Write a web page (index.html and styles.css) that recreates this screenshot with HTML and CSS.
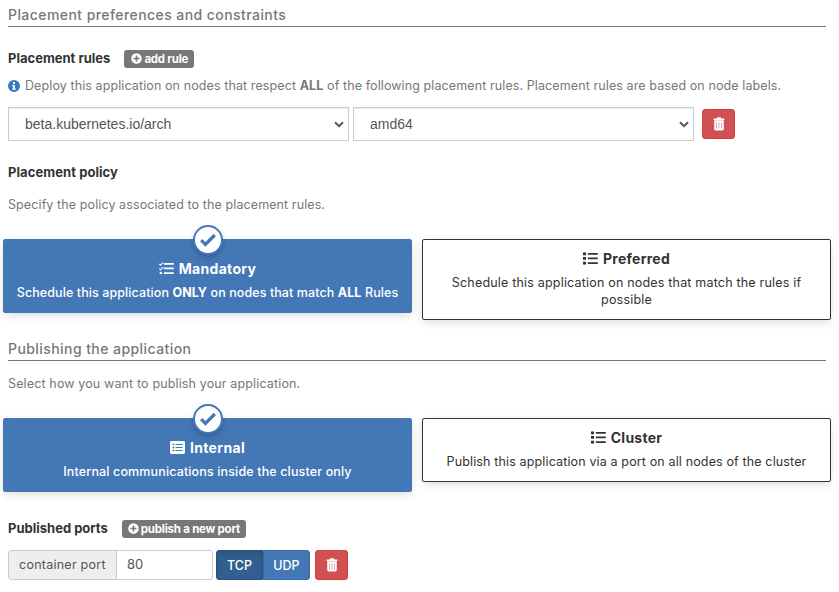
FILE: index.html
```html
<!DOCTYPE html>
<html lang="en">
<head>
<meta charset="utf-8">
<title>Placement and publishing</title>
<link rel="stylesheet" href="styles.css">
</head>
<body>
<svg width="0" height="0" class="defs" aria-hidden="true">
  <symbol id="plus" viewBox="0 0 12 12"><path fill-rule="evenodd" d="M6 .3a5.7 5.7 0 1 0 0 11.4A5.7 5.7 0 0 0 6 .3zM5.1 2.7h1.8v2.4h2.4v1.8H6.9v2.4H5.1V6.900H2.700V5.100h2.400z"/></symbol>
  <symbol id="info" viewBox="0 0 12 12"><path fill-rule="evenodd" d="M6 0a6 6 0 1 0 0 12A6 6 0 0 0 6 0zM5 2h2v2H5zM4.300 5h2.600v3.600h.8v1.200H4.300V8.600h.8V6.200h-.8z"/></symbol>
  <symbol id="trash" viewBox="0 0 12 14"><path fill-rule="evenodd" d="M.7 1.400h3L4.300.3h3.400l.6 1.100h3v1.700H.7zM1.200 3.300h9.600V12a1.400 1.400 0 0 1-1.400 1.400H2.600A1.400 1.400 0 0 1 1.200 12zM3.400 5.300v6.200h.5V5.300zM5.750 5.300v6.200h.5V5.300zM8.100 5.300v6.200h.5V5.300z"/></symbol>
  <symbol id="check" viewBox="0 0 18 14"><path d="M2.200 7.200l4.200 4.200L15.800 2" fill="none" stroke="currentColor" stroke-width="3.200"/></symbol>
  <symbol id="list" viewBox="0 0 15 13"><path d="M0 .5h3v2.700H0zM0 5.100h3v2.700H0zM0 9.700h3v2.700H0zM4.800 1h10v1.700h-10zM4.800 5.600h10v1.700h-10zM4.800 10.200h10v1.700h-10z"/></symbol>
  <symbol id="tasks" viewBox="0 0 15 13"><path d="M4.800 1h10v1.700h-10zM4.800 5.600h10v1.700h-10zM4.800 10.200h10v1.700h-10z"/><circle cx="1.800" cy="11" r="1.300"/><path d="M.3 2l1.200 1.200L4 .5M.3 6.600l1.200 1.200L4 5.100" fill="none" stroke="currentColor" stroke-width="1.100"/></symbol>
  <symbol id="listbox" viewBox="0 0 15 13"><path fill-rule="evenodd" d="M1.400 0h12.200A1.400 1.400 0 0 1 15 1.400v10.200a1.400 1.400 0 0 1-1.400 1.400H1.400A1.400 1.400 0 0 1 0 11.600V1.400A1.400 1.400 0 0 1 1.400 0zM2.600 2.700v1.600h1.800V2.700zM2.600 5.700v1.600h1.800V5.700zM2.600 8.700v1.600h1.800V8.700zM5.600 3v1.100h7V3zM5.600 6v1.100h7V6zM5.600 9v1.100h7V9z"/></symbol>
  <symbol id="chevron" viewBox="0 0 10 7"><path d="M1 1.200l4 4 4-4" fill="none" stroke="currentColor" stroke-width="2"/></symbol>
</svg>
<main>
  <h2 class="section">Placement preferences and constraints</h2>
  <div class="heading rules"><strong>Placement rules</strong><button class="tag"><svg><use href="#plus"/></svg><span>add rule</span></button></div>
  <p class="hint info"><svg><use href="#info"/></svg><span>Deploy this application on nodes that respect <b>ALL</b> of the following placement rules. Placement rules are based on node labels.</span></p>
  <div class="rule-row">
    <div class="select"><span>beta.kubernetes.io/arch</span><svg><use href="#chevron"/></svg></div>
    <div class="select"><span>amd64</span><svg><use href="#chevron"/></svg></div>
    <button class="trash" aria-label="Remove rule"><svg><use href="#trash"/></svg></button>
  </div>
  <div class="heading policy"><strong>Placement policy</strong></div>
  <p class="hint specify">Specify the policy associated to the placement rules.</p>
  <div class="cards">
    <div class="card selected"><span class="badge"><svg><use href="#check"/></svg></span>
      <div class="title"><svg><use href="#tasks"/></svg><span>Mandatory</span></div>
      <p class="snug">Schedule this application <b>ONLY</b> on nodes that match <b>ALL</b> Rules</p></div>
    <div class="card">
      <div class="title"><svg><use href="#list"/></svg><span>Preferred</span></div>
      <p class="loose">Schedule this application on nodes that match the rules if<br>possible</p></div>
  </div>
  <h2 class="section second">Publishing the application</h2>
  <p class="hint choose">Select how you want to publish your application.</p>
  <div class="cards">
    <div class="card selected"><span class="badge"><svg><use href="#check"/></svg></span>
      <div class="title"><svg><use href="#listbox"/></svg><span>Internal</span></div>
      <p>Internal communications inside the cluster only</p></div>
    <div class="card">
      <div class="title"><svg><use href="#list"/></svg><span>Cluster</span></div>
      <p>Publish this application via a port on all nodes of the cluster</p></div>
  </div>
  <div class="heading ports"><strong>Published ports</strong><button class="tag"><svg><use href="#plus"/></svg><span>publish a new port</span></button></div>
  <div class="port-row">
    <div class="group"><span class="addon">container port</span><span class="value">80</span></div>
    <div class="toggle"><button class="on">TCP</button><button>UDP</button></div>
    <button class="trash" aria-label="Remove port"><svg><use href="#trash"/></svg></button>
  </div>
</main>
</body>
</html>
```
FILE: styles.css
```css
* { box-sizing: border-box; }
body { margin: 0; background: #fff; color: #333; font: 12.5px/17px Inter, "Open Sans", sans-serif; overflow: hidden; }
.defs { position: absolute; }
svg { fill: currentColor; flex: none; display: block; }
button { font: inherit; color: #fff; margin: 0; padding: 0; border: 0; }
p, h2 { margin: 0; white-space: nowrap; }
.section { height: 21px; margin: 6px 13px 0 8px; border-bottom: 1px solid #777; color: #777; font-size: 14px; font-weight: 500; line-height: 18px; letter-spacing: .43px; }
.heading { display: flex; align-items: center; height: 18px; margin-left: 8px; }
.heading strong { font-size: 13px; font-weight: 700; }
.rules { margin-top: 22px; }
.policy strong { letter-spacing: .07px; }
.tag { display: flex; align-items: center; gap: 2px; height: 18px; margin: 2px 0 0 14px; padding: 0 6px 0 7px; border-radius: 3px; background: #777; font-size: 11.5px; line-height: 18px; font-weight: 700; letter-spacing: -.23px; white-space: nowrap; }
.tag svg { width: 11px; height: 11px; margin-bottom: 1px; }
.rules .tag { width: 70px; }
.ports .tag { width: 124px; padding-left: 6px; }
.hint { color: #777; margin-left: 8px; height: 18px; line-height: 18px; letter-spacing: .1px; }
.info { display: flex; align-items: center; gap: 5px; margin-top: 10px; }
.info svg { width: 12px; height: 12px; margin-bottom: 1px; color: #337ab7; }
.rule-row { display: flex; gap: 4px; margin: 12px 0 0 8px; }
.select { display: flex; align-items: center; justify-content: space-between; width: 341px; height: 34px; padding: 0 4px 1px 16px; border: 1px solid #ccc; color: #555; font: 14px/20px "Liberation Sans", sans-serif; box-shadow: inset 0 1px 1px rgba(0,0,0,.075); }
.select svg { width: 10px; height: 7px; margin-top: 1px; }
.trash { display: flex; align-items: center; justify-content: center; width: 33px; height: 30px; border: 1px solid #d43f3a; border-radius: 3px; background: #d05053; }
.trash svg { width: 12px; height: 14px; }
.rule-row .trash { margin: 2px 0 0 4px; }
.policy { margin-top: 22px; }
.specify { margin-top: 15px; }
.cards { display: grid; grid-template-columns: 409px 409px; gap: 10px; align-items: start; margin: 25px 0 0 3px; }
.card { position: relative; padding: 9px 10px 11px; border: 1px solid #333; border-radius: 2px; text-align: center; box-shadow: 0 3px 10px -2px rgba(0,0,0,.18); }
.card p { margin-top: 6px; letter-spacing: .14px; }
.card .snug { letter-spacing: .09px; }
.card .loose { letter-spacing: .19px; }
.selected { padding-top: 19px; border-color: #4377b6; background: #4377b6; color: #fff; font-weight: 500; }
.title { display: flex; align-items: center; justify-content: center; gap: 5px; height: 19px; font-size: 14px; font-weight: 700; letter-spacing: .25px; }
.selected .title { letter-spacing: .33px; }
.title svg { width: 15px; height: 13px; }
.badge { position: absolute; top: -15px; left: 189px; display: grid; place-items: center; width: 30px; height: 30px; border: 2px solid #4377b6; border-radius: 50%; background: #fff; color: #4377b6; box-shadow: 0 3px 6px -1px rgba(0,0,0,.25); }
.badge svg { width: 18px; height: 14px; }
.second { margin-top: 20px; }
.choose { margin-top: 14px; letter-spacing: .14px; }
.ports { margin-top: 27px; }
.port-row { display: flex; margin: 13px 0 0 8px; height: 30px; }
.group { display: flex; width: 205px; border: 1px solid #ccc; border-radius: 3px; color: #555; line-height: 27px; overflow: hidden; }
.addon { width: 108px; padding-left: 10px; background: #eee; border-right: 1px solid #ccc; letter-spacing: .25px; }
.value { padding-left: 10px; font-size: 13px; }
.toggle { display: flex; margin: 0 5px 0 3px; width: 94px; }
.toggle button { width: 47px; background: #4377b6; border: 1px solid #3a6aa4; border-radius: 0 3px 3px 0; font-weight: 500; }
.toggle .on { background: #335f90; border-color: #2a5080; border-radius: 3px 0 0 3px; box-shadow: inset 0 3px 5px rgba(0,0,0,.125); }
```
